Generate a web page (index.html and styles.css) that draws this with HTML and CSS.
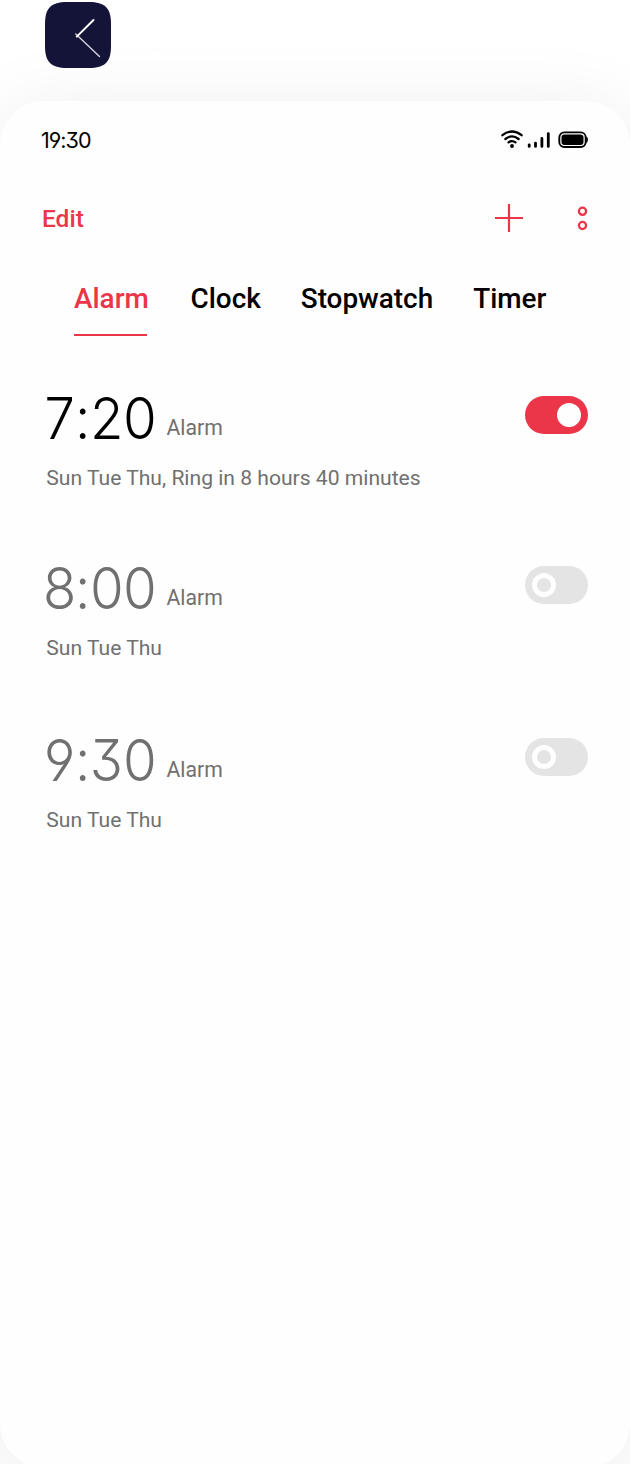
FILE: index.html
```html
<!DOCTYPE html>
<html lang="en">
<head>
<meta charset="utf-8">
<title>Clock</title>
<link rel="stylesheet" href="styles.css">
</head>
<body>
<header class="app-header">
  <svg class="app-icon" viewBox="0 0 66 66" aria-hidden="true">
    <path d="M0 22C0 6 6 0 22 0H44C60 0 66 6 66 22V44C66 60 60 66 44 66H22C6 66 0 60 0 44Z" fill="#141438"/>
    <path d="M30.8 32L54.5 54.5" stroke="#d4d4dc" stroke-width="1.4" stroke-linecap="round"/>
    <path d="M31.8 34.6L48.5 18" stroke="#fff" stroke-width="2" stroke-linecap="round"/>
  </svg>
  <span class="app-name">Clock</span>
</header>
<main class="screen">
  <div class="status">
    <span class="status-time">19:30</span>
    <svg class="status-icons" viewBox="0 0 88 20" aria-hidden="true">
      <g fill="none" stroke="#000" stroke-width="2.3" stroke-linecap="round">
        <path d="M2.4 5.2Q12 -2.2 21.6 5.2M5.4 9Q12 3.8 18.6 9M8.5 12.4Q12 9.8 15.5 12.4"/>
        <path d="M29.2 14.8V16.4M35.5 13.1V16.4M41.9 8.4V16.4M48.3 3.6V16.4" stroke-width="2.8"/>
        <rect x="59.3" y="2.4" width="26.4" height="14.6" rx="5" stroke-width="1.9"/>
      </g>
      <circle cx="12" cy="16" r="1.9"/>
      <rect x="61.5" y="4.4" width="22" height="10.6" rx="3"/>
      <path d="M86.2 6.5Q88 6.8 88 9.6T86.2 12.7Z"/>
    </svg>
  </div>
  <div class="toolbar">
    <span class="edit">Edit</span>
    <svg class="tools" viewBox="0 0 94 28" fill="none" stroke="#eb3548" aria-hidden="true">
      <path d="M0 14H28M14 0V28" stroke-width="2.2"/>
      <circle cx="87.5" cy="7.3" r="3.6" stroke-width="2.3"/>
      <circle cx="87.5" cy="21.5" r="3.6" stroke-width="2.3"/>
    </svg>
  </div>
  <nav class="tabs">
    <span class="tab active">Alarm</span>
    <span class="tab">Clock</span>
    <span class="tab">Stopwatch</span>
    <span class="tab">Timer</span>
  </nav>
  <section class="alarms">
    <article class="alarm on">
      <div class="info">
        <div class="line"><span class="time">7<span class="colon">:</span>20</span><span class="label">Alarm</span></div>
        <div class="days">Sun Tue Thu, Ring in 8 hours 40 minutes</div>
      </div>
      <span class="switch"><span class="knob"></span></span>
    </article>
    <article class="alarm">
      <div class="info">
        <div class="line"><span class="time">8<span class="colon">:</span>00</span><span class="label">Alarm</span></div>
        <div class="days">Sun Tue Thu</div>
      </div>
      <span class="switch"><span class="knob"></span></span>
    </article>
    <article class="alarm">
      <div class="info">
        <div class="line"><span class="time">9<span class="colon">:</span>30</span><span class="label">Alarm</span></div>
        <div class="days">Sun Tue Thu</div>
      </div>
      <span class="switch"><span class="knob"></span></span>
    </article>
  </section>
</main>
</body>
</html>
```

FILE: styles.css
```css
* { box-sizing: border-box; }
body {
  margin: 0;
  height: 1464px;
  overflow: hidden;
  background: #fff;
  font-family: Roboto, sans-serif;
}
.app-header {
  height: 101px;
  padding: 2px 45px 0;
  display: flex;
  align-items: flex-start;
  gap: 30px;
}
.app-icon { width: 66px; height: 66px; }
.app-name {
  font: 500 38px/84px Roboto, sans-serif;
  color: #fff;
}
.screen {
  height: 1367px;
  border-radius: 44px;
  background: #fefefe;
  box-shadow: 0 10px 80px rgba(0, 0, 0, .08);
  padding-top: 24px;
}
.status {
  height: 30px;
  padding: 0 42px 0 41px;
  display: flex;
  justify-content: space-between;
  align-items: center;
}
.status-time {
  font: 400 21.5px/30px Inter, sans-serif;
  font-feature-settings: "cv04", "cv09", "calt" 0;
  letter-spacing: -.95px;
}
.status-icons { width: 88px; height: 20px; }
.toolbar {
  height: 28px;
  margin-top: 49px;
  padding: 0 41px 0 42px;
  display: flex;
  justify-content: space-between;
  align-items: center;
}
.edit { color: #eb3548; font-size: 24.5px; font-weight: 500; line-height: 28px; padding-top: 2px; }
.tools { width: 94px; height: 28px; }
.tabs {
  margin-top: 47px;
  padding-left: 74px;
  height: 57px;
  display: flex;
  gap: 40px;
  font-size: 27.9px;
  font-weight: 500;
  line-height: 40px;
}
.active {
  width: 72.5px;
  height: 57px;
  margin-right: 4px;
  color: #eb3548;
  border-bottom: 2px solid #eb3548;
}
.alarms { padding: 51px 42px 0 46px; }
.alarm {
  height: 170px;
  display: flex;
  justify-content: space-between;
  color: #707070;
}
.alarm:nth-child(2) { height: 172px; }
.line { display: flex; align-items: flex-end; gap: 13px; height: 75px; }
.time {
  width: 108px;
  align-self: flex-start;
  white-space: nowrap;
  font: 300 58px/62px Inter, sans-serif;
  font-feature-settings: "tnum", "cv04", "cv09", "calt" 0;
  letter-spacing: -2.3px;
  transform: scaleX(.94);
  transform-origin: left;
  margin-left: -4.5px;
  margin-right: 4px;
}
.colon {
  display: inline-block;
  width: 15px;
  text-align: center;
  letter-spacing: 0;
  font-feature-settings: "tnum" 0, "calt" 0;
}
.on .time { color: #000; }
.label { font-size: 21.2px; line-height: 24px; margin-bottom: 22px; }
.days { font-size: 21.1px; line-height: 32px; margin-top: -.5px; padding-left: .3px; }
.switch {
  width: 63px;
  height: 38.5px;
  margin-top: 8.7px;
  padding: 7px;
  border-radius: 20px;
  background: #e4e4e4;
  display: flex;
  align-items: center;
}
.knob {
  width: 24px;
  height: 24px;
  border-radius: 50%;
  border: 5px solid #fefefe;
}
.on .switch { background: #eb3548; justify-content: flex-end; }
.on .knob { background: #fefefe; }
```
